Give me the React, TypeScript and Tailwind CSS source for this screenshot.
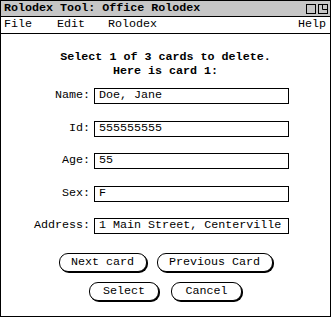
import React from 'react';

const mono = { fontFamily: '"Liberation Mono", "DejaVu Sans Mono", monospace' };

const fields = [
  { label: 'Name:', value: 'Doe, Jane' },
  { label: 'Id:', value: '555555555' },
  { label: 'Age:', value: '55' },
  { label: 'Sex:', value: 'F' },
  { label: 'Address:', value: '1 Main Street, Centerville' },
];

const Button: React.FC<{ label: string; width: string }> = ({ label, width }) => (
  <button
    className={`${width} h-[19px] flex items-center justify-center rounded-[9px] border border-black bg-white text-[11.7px] leading-none text-black shadow-[1px_1px_0_0_#000]`}
  >
    {label}
  </button>
);

export default function App() {
  return (
    <div
      style={mono}
      className="w-[331px] h-[317px] flex flex-col border border-black bg-white text-black text-[11.7px]"
    >
      {/* title bar */}
      <div className="h-[16px] flex items-center justify-between pl-[3px] pr-[2px] bg-[#c6c6c6] border-b border-black">
        <span className="font-bold leading-none">Rolodex Tool: Office Rolodex</span>
        <div className="flex items-center gap-[2px]">
          <svg width="10" height="10" viewBox="0 0 10 10">
            <rect x="0.5" y="0.5" width="9" height="9" fill="none" stroke="#000" />
          </svg>
          <svg width="10" height="10" viewBox="0 0 10 10">
            <rect x="0.5" y="0.5" width="9" height="9" fill="none" stroke="#000" />
            <path d="M4.5 0.5 V5.5 H9.5" fill="none" stroke="#000" />
          </svg>
        </div>
      </div>

      {/* menu bar */}
      <div className="h-[17px] flex items-center pl-[3px] pr-[4px] border-b border-black leading-none">
        <span className="w-[53px]">File</span>
        <span className="w-[51px]">Edit</span>
        <span>Rolodex</span>
        <span className="ml-auto">Help</span>
      </div>

      {/* body */}
      <div className="flex flex-col items-center pt-[16px]">
        <div className="font-bold text-center leading-[14px]">
          <div>Select 1 of 3 cards to delete.</div>
          <div>Here is card 1:</div>
        </div>

        <div className="self-start mt-[10px] flex flex-col gap-[16.5px]">
          {fields.map((f) => (
            <div key={f.label} className="h-[16px] flex items-center leading-none">
              <span className="w-[90px] pr-[1px] text-right">{f.label}</span>
              <div className="ml-[3px] w-[195px] h-[16px] flex items-center pl-[4px] border border-black">
                {f.value}
              </div>
            </div>
          ))}
        </div>

        <div className="mt-[19px] flex gap-[10px]">
          <Button label="Next card" width="w-[88px]" />
          <Button label="Previous Card" width="w-[116px]" />
        </div>
        <div className="mt-[10px] flex gap-[12px]">
          <Button label="Select" width="w-[70px]" />
          <Button label="Cancel" width="w-[71px]" />
        </div>
      </div>
    </div>
  );
}
